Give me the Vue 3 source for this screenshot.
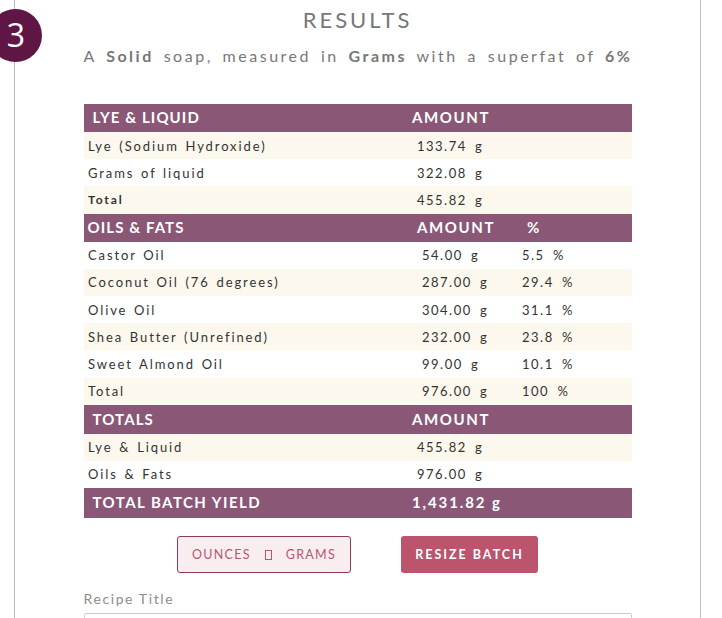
<script setup>
const lye = [
  { name: 'Lye (Sodium Hydroxide)', amount: '133.74 g' },
  { name: 'Grams of liquid', amount: '322.08 g' },
  { name: 'Total', amount: '455.82 g', strong: true }
]
const oils = [
  { name: 'Castor Oil', amount: '54.00 g', pct: '5.5 %' },
  { name: 'Coconut Oil (76 degrees)', amount: '287.00 g', pct: '29.4 %' },
  { name: 'Olive Oil', amount: '304.00 g', pct: '31.1 %' },
  { name: 'Shea Butter (Unrefined)', amount: '232.00 g', pct: '23.8 %' },
  { name: 'Sweet Almond Oil', amount: '99.00 g', pct: '10.1 %' },
  { name: 'Total', amount: '976.00 g', pct: '100 %' }
]
const totals = [
  { name: 'Lye & Liquid', amount: '455.82 g' },
  { name: 'Oils & Fats', amount: '976.00 g' }
]
</script>

<template>
  <div class="page">
    <div class="step">3</div>
    <div class="panel">
      <h1 class="title">RESULTS</h1>
      <p class="summary">A <b>Solid</b> soap, measured in <b>Grams</b> with a superfat of <b>6%</b></p>

      <div class="tables">
        <section class="block two">
          <div class="row head"><span>LYE &amp; LIQUID</span><span>AMOUNT</span><span></span></div>
          <div v-for="r in lye" :key="r.name" class="row" :class="{ strong: r.strong }">
            <span>{{ r.name }}</span><span>{{ r.amount }}</span><span></span>
          </div>
        </section>

        <section class="block three">
          <div class="row head"><span>OILS &amp; FATS</span><span>AMOUNT</span><span class="pct">%</span></div>
          <div v-for="r in oils" :key="r.name" class="row">
            <span>{{ r.name }}</span><span>{{ r.amount }}</span><span>{{ r.pct }}</span>
          </div>
        </section>

        <section class="block two">
          <div class="row head tall"><span>TOTALS</span><span>AMOUNT</span><span></span></div>
          <div v-for="r in totals" :key="r.name" class="row">
            <span>{{ r.name }}</span><span>{{ r.amount }}</span><span></span>
          </div>
          <div class="row head yield"><span>TOTAL BATCH YIELD</span><span>1,431.82 g</span><span></span></div>
        </section>
      </div>

      <div class="actions">
        <button class="btn outline"><span>OUNCES</span><i class="swap"></i><span>GRAMS</span></button>
        <button class="btn solid">RESIZE BATCH</button>
      </div>

      <label class="field-label">Recipe Title</label>
      <div class="field"></div>
    </div>
  </div>
</template>

<style scoped>
.page {
  position: relative;
  width: 722px;
  height: 618px;
  overflow: hidden;
  background: #fff;
  font-family: "Lato", "Open Sans", sans-serif;
}
.step {
  position: absolute;
  left: -11px;
  top: 9px;
  width: 53px;
  height: 53px;
  border-radius: 50%;
  background: #5f1645;
  color: #fff;
  font-size: 32px;
  line-height: 52px;
  text-align: center;
  padding-left: 1px;
  box-sizing: border-box;
  font-family: "Open Sans", sans-serif;
}
.panel {
  margin-left: 14px;
  width: 687px;
  height: 618px;
  box-sizing: border-box;
  border-left: 1px solid #bbb;
  border-right: 1px solid #bbb;
  padding: 0 68.5px;
}
.title {
  margin: 0;
  padding-top: 7px;
  font-size: 22px;
  line-height: 26px;
  font-weight: 400;
  letter-spacing: 3px;
  color: #777;
  text-align: center;
}
.summary {
  margin: 10px 0 0;
  font-size: 16px;
  line-height: 26px;
  letter-spacing: 2.52px;
  word-spacing: 3.2px;
  color: #777;
  white-space: nowrap;
}
.tables {
  margin-top: 35px;
  width: 548px;
}
.block {
  display: block;
}
.row {
  display: grid;
  height: 27.2px;
  align-items: center;
  font-size: 13px;
  letter-spacing: 1.9px;
  word-spacing: 1.5px;
  color: #333;
  white-space: nowrap;
}
.two .row {
  grid-template-columns: 328.5px 110px 1fr;
}
.three .row {
  grid-template-columns: 333.5px 105px 1fr;
}
.row > span:first-child {
  padding-left: 4.5px;
}
.row > span:nth-child(n + 2) {
  letter-spacing: 1.5px;
  word-spacing: 3.5px;
}
.row > span:nth-child(2) {
  padding-left: 5px;
}
.two .row:not(.head):nth-child(even),
.three .row:not(.head):nth-child(odd) {
  background: #fdf8ee;
}
.strong > span:first-child {
  font-weight: 700;
  font-size: 12px;
}
.head {
  height: 28px;
  padding-bottom: 2px;
  box-sizing: border-box;
  background: #8a5876;
  color: #fff;
  font-size: 15px;
  font-weight: 700;
}
.row.head > span {
  letter-spacing: 1.1px;
  word-spacing: 0;
}
.row.head > span:nth-child(2) {
  padding-left: 0;
  letter-spacing: 1.6px;
}
.two .head > span:first-child {
  padding-left: 9px;
}
.three .head > span:first-child {
  padding-left: 4px;
}
.pct {
  padding-left: 5px;
}
.tall {
  height: 29px;
  padding-bottom: 1px;
}
.yield {
  height: 30px;
  padding-bottom: 3px;
}
.row.yield > span:first-child {
  letter-spacing: 1.45px;
}
.row.yield > span:nth-child(2) {
  letter-spacing: 1.9px;
}
.actions {
  display: flex;
  gap: 50px;
  margin-top: 18px;
  padding-left: 93.5px;
}
.btn {
  height: 37px;
  border-radius: 3px;
  box-sizing: border-box;
  font-family: inherit;
  font-size: 12.5px;
  padding: 0;
}
.outline {
  display: flex;
  align-items: center;
  justify-content: center;
  gap: 14px;
  width: 174px;
  background: #f8eef0;
  border: 1px solid #8f3a56;
  color: #bc546e;
  letter-spacing: 1.3px;
}
.swap {
  display: block;
  width: 7px;
  height: 10px;
  box-sizing: border-box;
  border: 1px solid #bc546e;
}
.solid {
  width: 137px;
  background: #bc546e;
  border: 0;
  color: #fff;
  font-weight: 700;
  letter-spacing: 2px;
}
.field-label {
  display: block;
  margin-top: 17px;
  font-size: 14px;
  line-height: 18px;
  letter-spacing: 1.6px;
  color: #8d8d8d;
}
.field {
  margin-top: 5px;
  width: 548px;
  height: 40px;
  box-sizing: border-box;
  border: 1px solid #ccc;
  border-radius: 2px;
}
</style>

<style>
html, body { margin: 0; background: #fff; }
</style>
